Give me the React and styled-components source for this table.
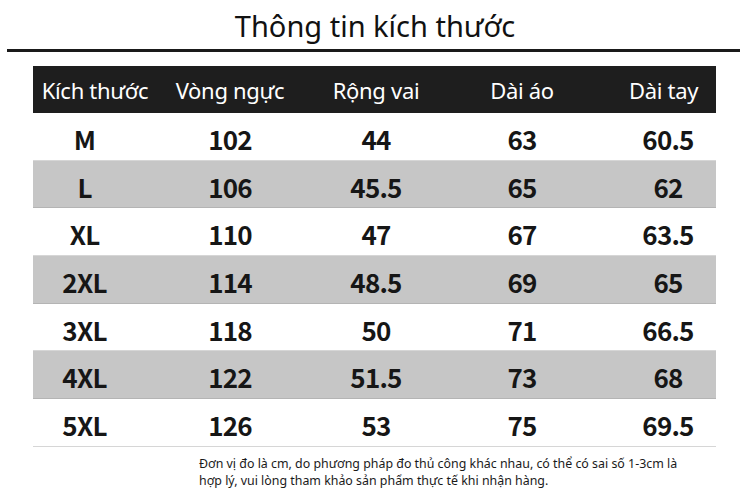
import React from 'react';
import styled, { createGlobalStyle } from 'styled-components';

const GlobalStyle = createGlobalStyle`
  html, body {
    margin: 0;
    padding: 0;
    background: #fff;
  }
  body {
    font-family: "Noto Sans", "Liberation Sans", sans-serif;
  }
`;

const Page = styled.div`
  width: 750px;
  height: 493px;
  overflow: hidden;
  background: #fff;
  display: flex;
  flex-direction: column;
`;

const Title = styled.h1`
  margin: 0;
  height: 49px;
  display: flex;
  align-items: center;
  justify-content: center;
  padding-top: 2px;
  box-sizing: border-box;
  font-family: "Noto Sans", sans-serif;
  font-weight: 400;
  font-size: 29px;
  color: #111;
`;

const Rule = styled.div`
  margin: 0 10px 0 7px;
  height: 3px;
  background: #1a1a1a;
`;

const Table = styled.div`
  margin: 14px 34px 0 33px;
  display: flex;
  flex-direction: column;
`;

const COLS = '124px 146px 146px 146px 1fr';

const HeadRow = styled.div`
  display: grid;
  grid-template-columns: ${COLS};
  height: 47px;
  align-items: center;
  background: #1e1e1e;
  color: #fff;
  font-family: "Noto Sans", sans-serif;
  font-size: 22px;
  letter-spacing: -0.3px;
`;

const Row = styled.div`
  display: grid;
  grid-template-columns: ${COLS};
  height: 47.7px;
  align-items: center;
  box-sizing: border-box;
  background: ${p => (p.$shade ? '#c6c6c6' : '#fff')};
  border-bottom: 1px solid ${p => (p.$shade ? '#b4b4b4' : '#d6d6d6')};
  color: #161616;
  font-family: "Noto Sans CJK SC", "Noto Sans", sans-serif;
  font-weight: 700;
  font-size: 26px;
  letter-spacing: -0.8px;
`;

const Cell = styled.div`
  text-align: center;
  padding-left: ${p => p.$pl || 0}px;
  padding-right: ${p => p.$pr || 0}px;
  padding-top: ${p => p.$pt || 0}px;
  white-space: nowrap;
`;

const Note = styled.p`
  margin: 8px 0 0 199px;
  width: 500px;
  font-family: "Noto Sans", sans-serif;
  font-size: 12.4px;
  line-height: 17px;
  color: #1a1a1a;
`;

const headers = ['Kích thước', 'Vòng ngực', 'Rộng vai', 'Dài áo', 'Dài tay'];

const rows = [
  ['M', '102', '44', '63', '60.5'],
  ['L', '106', '45.5', '65', '62'],
  ['XL', '110', '47', '67', '63.5'],
  ['2XL', '114', '48.5', '69', '65'],
  ['3XL', '118', '50', '71', '66.5'],
  ['4XL', '122', '51.5', '73', '68'],
  ['5XL', '126', '53', '75', '69.5'],
];

export default function App() {
  return (
    <Page>
      <GlobalStyle />
      <Title>Thông tin kích thước</Title>
      <Rule />
      <Table>
        <HeadRow>
          {headers.map((h, i) => (
            <Cell key={h} $pl={i === 4 ? 16 : 0}>
              {h}
            </Cell>
          ))}
        </HeadRow>
        {rows.map((r, ri) => (
          <Row key={r[0]} $shade={ri % 2 === 1}>
            {r.map((v, i) => (
              <Cell key={i} $pr={i === 0 ? 21 : 0} $pl={i === 4 ? 25 : 0} $pt={4}>
                {v}
              </Cell>
            ))}
          </Row>
        ))}
      </Table>
      <Note>
        Đơn vị đo là cm, do phương pháp đo thủ công khác nhau, có thể có sai số 1-3cm là hợp lý, vui lòng tham khảo sản phẩm thực tế khi nhận hàng.
      </Note>
    </Page>
  );
}
